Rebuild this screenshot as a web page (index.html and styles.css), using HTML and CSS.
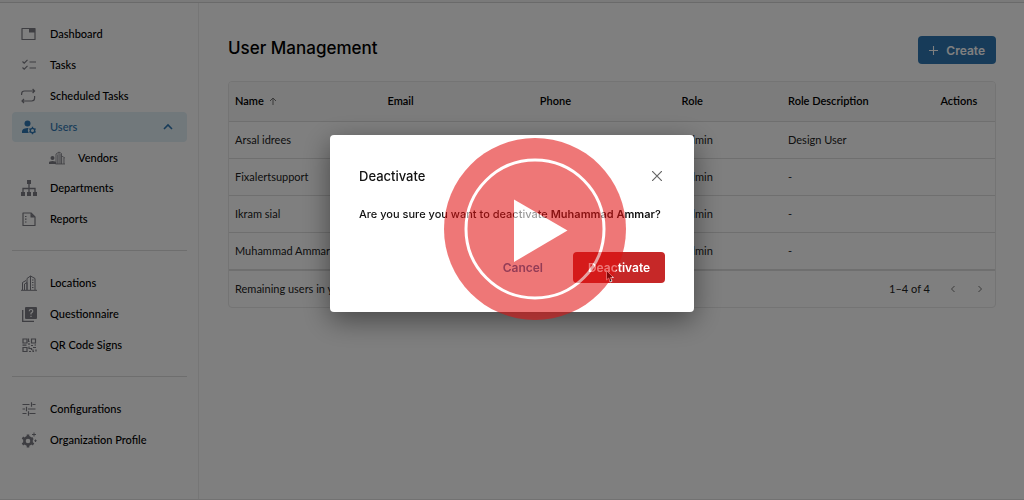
FILE: index.html
```html
<!DOCTYPE html>
<html lang="en">
<head>
    <meta charset="UTF-8">
    <meta name="viewport" content="width=device-width, initial-scale=1.0">
    <title>User Management</title>
    <link rel="stylesheet" href="styles.css">
</head>
<body>
    <div class="topbar"></div>

    <div class="layout">
        <!-- Sidebar -->
        <nav class="sidebar">
            <ul class="nav-list">
                <li><a href="#" class="nav-item">
                    <svg class="icon" viewBox="0 0 16 16"><path d="M1 2.5h13v11h-13z" fill="none" stroke="currentColor" stroke-width="1.2" stroke-linejoin="round"/><path d="M8 3h6v3.500h-6z"/></svg>
                    Dashboard</a></li>
                <li><a href="#" class="nav-item">
                    <svg class="icon" viewBox="0 0 16 16"><path d="M1.500 4.500l1.700 1.600L6.500 2.800M1.500 10.500l1.700 1.600L6.500 8.800M8.500 5H15M8.500 11H15" fill="none" stroke="currentColor" stroke-width="1.200"/></svg>
                    Tasks</a></li>
                <li><a href="#" class="nav-item">
                    <svg class="icon" viewBox="0 0 16 16"><path d="M.6 7V6q0-3 3-3h10M11.600 1l2 2-2 2M13.600 8v2q0 3-3 3H1M3 11l-2 2 2 2" fill="none" stroke="currentColor" stroke-width="1.200"/></svg>
                    Scheduled Tasks</a></li>
                <li><a href="#" class="nav-item active">
                    <svg class="icon" viewBox="0 0 16 16"><circle cx="6.500" cy="4.500" r="3"/><path d="M1 14v-1.500C1 10 4 9 7.500 9c-1 2-.8 3.500.3 5z"/><circle cx="11.500" cy="11.500" r="2.200" fill="none" stroke="currentColor" stroke-width="1.300"/><path d="M11.500 7.800v1.500M11.500 13.700v1.500M8.300 9.700l1.300.7M13.400 12.600l1.300.7M14.700 9.700l-1.300.7M9.600 12.600l-1.300.7" stroke="currentColor" stroke-width="1.300"/></svg>
                    Users
                    <svg class="chevron" viewBox="0 0 10 10"><path d="M1 7l4-4 4 4" fill="none" stroke="currentColor" stroke-width="1.600"/></svg></a></li>
                <li><a href="#" class="nav-item sub">
                    <svg class="icon" viewBox="0 0 16 16"><circle cx="3.500" cy="8" r="2"/><path d="M0 14v-1.500Q0 11 3.500 11T7 12.500V14z"/><path d="M7 14V4l3-2v12M10 2l2.500 1.500V14M12.500 6L16 8v6H6.500" fill="none" stroke="currentColor" stroke-width=".8"/><path d="M8.500 4.500V14M11.300 4v10M14.300 8v6" stroke="currentColor" stroke-width=".6"/></svg>
                    Vendors</a></li>
                <li><a href="#" class="nav-item">
                    <svg class="icon" viewBox="0 0 16 16"><path d="M6 0h4v4H6zM0 12h4v4H0zM6 12h4v4H6zM12 12h4v4h-4z"/><path d="M8 4v8M2 12V8.500h12V12" fill="none" stroke="currentColor" stroke-width="1.300"/></svg>
                    Departments</a></li>
                <li><a href="#" class="nav-item">
                    <svg class="icon" viewBox="0 0 16 16"><path d="M2 2h8l4 4v8.500h-12z" fill="none" stroke="currentColor" stroke-width="1.200" stroke-linejoin="round"/><path d="M9.500 2v4.500h4.500z"/><path d="M4 5.500h1.500M4 8.200h1.500M4 11h1.500" stroke="currentColor" stroke-width="1.200"/></svg>
                    Reports</a></li>
            </ul>
            <hr class="divider">
            <ul class="nav-list">
                <li><a href="#" class="nav-item">
                    <svg class="icon" viewBox="0 0 16 16"><path d="M0 15.300h16M1.500 15V7.500L5 5.500M3.500 15V9L6 7.500V15M6 15V3.500L9.500 1l4.500 2.500V15M9.500 1v14" fill="none" stroke="currentColor"/><path d="M11 5h1.500M11 7.500h1.500M11 10h1.500M11 12.500h1.500" stroke="currentColor"/></svg>
                    Locations</a></li>
                <li><a href="#" class="nav-item">
                    <svg class="icon" viewBox="0 0 16 16"><path d="M1.700 4v11.300H13" fill="none" stroke="currentColor" stroke-width="1.300"/><rect x="4" y="1" width="12" height="12" rx="1"/><path d="M8.200 5.200q0-1.700 1.800-1.700t1.800 1.500Q11.800 6.200 10 7.200V8.500M10 9.700V11" fill="none" stroke="#fff" stroke-width="1.200"/></svg>
                    Questionnaire</a></li>
                <li><a href="#" class="nav-item">
                    <svg class="icon" viewBox="0 0 16 16"><path d="M2 2h4v4H2zM10.500 2h4v4h-4zM2 10.500h4v4H2z" fill="none" stroke="currentColor" stroke-width="1.200"/><path d="M7.500 1.500v3h1M8 6v2M1.500 8.200h4M10 8.500h2M13.500 8h1.500M8 9.500v2h2.500v1.500M12 10.500h3M8 14.500h2M12 12.500v2h1M15 12.500v2" fill="none" stroke="currentColor" stroke-width="1.200"/></svg>
                    QR Code Signs</a></li>
            </ul>
            <hr class="divider">
            <ul class="nav-list">
                <li><a href="#" class="nav-item">
                    <svg class="icon" viewBox="0 0 16 16"><path d="M1.500 3.500h7M11.500 3.500h3M10.500 1.300v4.400M1.500 8H4M7 8h7.500M5.500 5.800v4.400M1.500 12.500h4M8.500 12.500h6M7.500 10.300v4.400" fill="none" stroke="currentColor" stroke-width="1.200"/></svg>
                    Configurations</a></li>
                <li><a href="#" class="nav-item">
                    <svg class="icon" viewBox="0 0 16 16"><circle cx="7" cy="9" r="3.600" fill="none" stroke="currentColor" stroke-width="2.600"/><path d="M7 2.500v3M7 12.500v3M1.400 5.700L4 7.300M10 10.700l2.600 1.600M1.400 12.300L4 10.700M10 7.300l2-1.200" stroke="currentColor" stroke-width="2.600"/><path d="M13 .5v4M11 2.500h4M14.500 7.500v2.500M13.300 8.700h2.400" stroke="currentColor"/></svg>
                    Organization Profile</a></li>
            </ul>
        </nav>

        <!-- Main content -->
        <main class="content">
            <div class="page-header">
                <h1 class="page-title">User Management</h1>
                <button class="create-button" type="button">
                    <svg class="plus" viewBox="0 0 10 10"><path d="M5 0v10M0 5h10" stroke="currentColor" stroke-width="1.200"/></svg>
                    Create
                </button>
            </div>

            <div class="table-card">
                <table class="users-table">
                    <thead>
                        <tr>
                            <th class="col-name">Name
                                <svg class="sort" viewBox="0 0 8 8"><path d="M4 8V1M1 4l3-3 3 3" fill="none" stroke="currentColor"/></svg></th>
                            <th class="col-email">Email</th>
                            <th class="col-phone">Phone</th>
                            <th class="col-role">Role</th>
                            <th class="col-desc">Role Description</th>
                            <th class="col-actions">Actions</th>
                        </tr>
                    </thead>
                    <tbody>
                        <tr><td>Arsal idrees</td><td></td><td></td><td>Admin</td><td>Design User</td><td></td></tr>
                        <tr><td>Fixalertsupport</td><td></td><td></td><td>Admin</td><td>-</td><td></td></tr>
                        <tr><td>Ikram sial</td><td></td><td></td><td>Admin</td><td>-</td><td></td></tr>
                        <tr><td>Muhammad Ammar</td><td></td><td></td><td>Admin</td><td>-</td><td></td></tr>
                    </tbody>
                </table>
                <div class="table-footer">
                    <span class="remaining">Remaining users in your plan</span>
                    <span>1–4 of 4</span>
                    <button class="page-button" type="button" aria-label="Previous page"><svg viewBox="0 0 8 8"><path d="M5.500 1l-3 3 3 3" fill="none" stroke="currentColor"/></svg></button>
                    <button class="page-button" type="button" aria-label="Next page"><svg viewBox="0 0 8 8"><path d="M2.500 1l3 3-3 3" fill="none" stroke="currentColor"/></svg></button>
                </div>
            </div>
        </main>
    </div>

    <!-- Deactivate dialog -->
    <div class="backdrop">
        <div class="dialog" role="dialog" aria-labelledby="dialogTitle">
            <div class="dialog-header">
                <h2 class="dialog-title" id="dialogTitle">Deactivate</h2>
                <button class="close-button" type="button" aria-label="Close"><svg viewBox="0 0 10 10"><path d="M0 0l10 10M10 0L0 10" stroke="currentColor" stroke-width="1.200"/></svg></button>
            </div>
            <p class="dialog-text">Are you sure you want to deactivate <b>Muhammad Ammar</b>?</p>
            <div class="dialog-actions">
                <button class="cancel-button" type="button">Cancel</button>
                <button class="deactivate-button" type="button">Deactivate</button>
            </div>
        </div>
    </div>

    <svg class="cursor" viewBox="0 0 8 13"><path d="M.5.500v9.500l2.200-2L4.200 12l1.800-.8-1.600-3.700h3z" fill="#000" stroke="#fff" stroke-width=".8"/></svg>

    <!-- Play button -->
    <svg class="play" viewBox="0 0 182 182">
        <circle cx="91" cy="91" r="91" fill="#e21010"/>
        <circle cx="91" cy="91" r="69" fill="none" stroke="#fff" stroke-width="3"/>
        <path d="M70 61.500L123.500 92.500 70 124z" fill="#fff"/>
    </svg>
</body>
</html>
```

FILE: styles.css
```css
* {
    box-sizing: border-box;
}

body {
    margin: 0;
    min-height: 100vh;
    display: flex;
    flex-direction: column;
    font-family: Lato, 'Liberation Sans', sans-serif;
    font-size: 11px;
    line-height: 16px;
    color: #222;
    background: #fff;
    border-bottom: 1px solid #e4e4e4;
}

button {
    font-family: inherit;
    border: none;
    padding: 0;
    background: none;
    cursor: pointer;
}

svg {
    display: block;
    fill: currentColor;
}

.topbar {
    height: 3px;
    background: #f4f4f4;
    border-bottom: 1px solid #d4d4d4;
}

.layout {
    flex: 1;
    display: flex;
}

/* Sidebar */
.sidebar {
    width: 199px;
    flex-shrink: 0;
    padding: 16px 11px 0 12px;
    border-right: 1px solid #ececec;
    font-weight: 500;
}

.nav-list {
    list-style: none;
    margin: 0;
    padding: 0;
    display: flex;
    flex-direction: column;
    gap: 1px;
}

.nav-item {
    display: flex;
    align-items: center;
    gap: 13px;
    height: 30px;
    padding: 0 14px 0 9px;
    border-radius: 4px;
    color: #000;
    text-decoration: none;
}

.nav-item.active {
    background: #e2f0f6;
    color: #2f77b3;
}

.nav-item.sub {
    height: 29px;
    padding-left: 37px;
}

.icon {
    width: 16px;
    height: 16px;
    color: #7c7c84;
}

.active .icon {
    color: #2f77b3;
}

.chevron {
    width: 10px;
    height: 10px;
    margin-left: auto;
}

.divider {
    margin: 16px 0 17px;
    border: none;
    border-top: 1px solid #dcdcdc;
}

/* Content */
.content {
    flex: 1;
    padding: 33px 28px 0 29px;
}

.page-header {
    display: flex;
    justify-content: space-between;
    align-items: flex-start;
    margin-bottom: 17px;
}

.page-title {
    margin: 0;
    font-family: Inter, 'Liberation Sans', sans-serif;
    font-size: 17px;
    line-height: 24px;
    font-weight: 500;
    color: #000;
}

.create-button {
    display: flex;
    align-items: center;
    gap: 8px;
    height: 28px;
    padding: 0 11px;
    border-radius: 4px;
    background: #2f77b3;
    color: #fff;
    font-family: Inter, 'Liberation Sans', sans-serif;
    font-size: 12px;
    font-weight: 600;
}

.plus {
    width: 9px;
    height: 9px;
}

.table-card {
    border: 1px solid #e8e8e8;
    border-radius: 4px;
    overflow: hidden;
}

.users-table {
    width: 100%;
    table-layout: fixed;
    border-collapse: collapse;
}

.users-table th,
.users-table td {
    height: 37px;
    padding: 0 6px;
    border-bottom: 1px solid #dedede;
    text-align: left;
    white-space: nowrap;
}

.users-table th {
    height: 39px;
    background: #f8f8f8;
    color: #000;
    font-weight: 600;
}

.col-name,
.col-email,
.col-desc {
    width: 19.9%;
}

.col-phone {
    width: 18.5%;
}

.col-role {
    width: 13.9%;
}

.sort {
    display: inline-block;
    width: 8px;
    height: 8px;
    margin-left: 2px;
    color: #777;
}

.table-footer {
    display: flex;
    align-items: center;
    gap: 19px;
    height: 37px;
    padding: 0 11px 0 6px;
    border-top: 1px solid #dedede;
}

.remaining {
    flex: 1;
}

.page-button {
    width: 8px;
    height: 8px;
    color: #777;
}

/* Dialog */
.backdrop {
    position: fixed;
    inset: 0;
    display: flex;
    justify-content: center;
    align-items: flex-start;
    padding-top: 135px;
    background: rgba(0, 0, 0, 0.5);
}

.dialog {
    width: 364px;
    padding: 29px;
    border-radius: 4px;
    background: #fff;
    box-shadow: 0 8px 28px rgba(0, 0, 0, 0.45);
    font-family: Inter, 'Liberation Sans', sans-serif;
}

.dialog-header {
    display: flex;
    justify-content: space-between;
    align-items: center;
    padding-right: 3px;
}

.dialog-title {
    margin: 0;
    font-size: 13px;
    line-height: 24px;
    font-weight: 500;
    color: #111;
}

.close-button {
    width: 10px;
    height: 10px;
    color: #666;
}

.dialog-text {
    margin: 18px 0 30px;
    font-size: 11px;
    font-weight: 500;
    color: #111;
    white-space: nowrap;
}

.dialog-text b {
    font-weight: 600;
}

.dialog-actions {
    display: flex;
    justify-content: flex-end;
    gap: 30px;
}

.cancel-button,
.deactivate-button {
    height: 31px;
    font-size: 12px;
    font-weight: 600;
}

.cancel-button {
    color: #2f77b3;
}

.deactivate-button {
    width: 92px;
    border-radius: 4px;
    background: #c62828;
    color: #fff;
}

.cursor {
    position: absolute;
    left: 606px;
    top: 270px;
    width: 8px;
    height: 13px;
}

.play {
    position: absolute;
    left: 444px;
    top: 138px;
    width: 182px;
    height: 182px;
    opacity: 0.57;
}
```
